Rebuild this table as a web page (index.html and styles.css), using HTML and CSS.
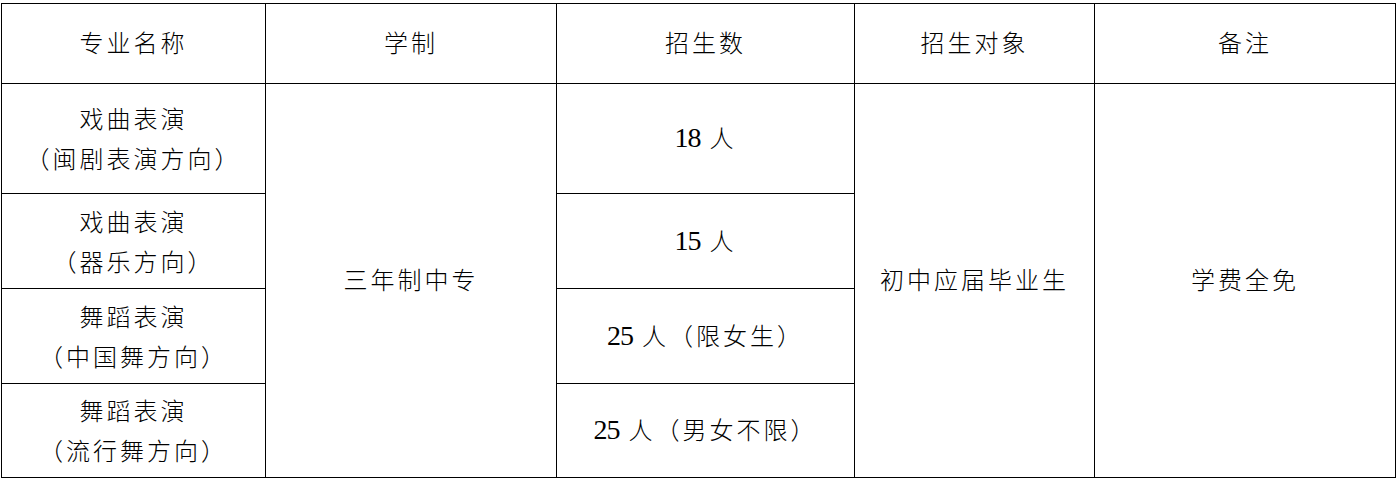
FILE: index.html
```html
<!DOCTYPE html>
<html lang="zh-CN">
<head>
<meta charset="utf-8">
<title>招生计划</title>
<link rel="stylesheet" href="styles.css">
</head>
<body>
<table class="plan">
  <colgroup>
    <col class="c-major">
    <col class="c-system">
    <col class="c-count">
    <col class="c-target">
    <col class="c-note">
  </colgroup>
  <thead>
    <tr class="r-head">
      <th>专业名称</th>
      <th>学制</th>
      <th>招生数</th>
      <th>招生对象</th>
      <th>备注</th>
    </tr>
  </thead>
  <tbody>
    <tr class="r-1">
      <td class="major"><div>戏曲表演</div><div>（闽剧表演方向）</div></td>
      <td rowspan="4">三年制中专</td>
      <td><span class="num">18</span> 人</td>
      <td rowspan="4">初中应届毕业生</td>
      <td rowspan="4">学费全免</td>
    </tr>
    <tr class="r-2">
      <td class="major"><div>戏曲表演</div><div>（器乐方向）</div></td>
      <td><span class="num">15</span> 人</td>
    </tr>
    <tr class="r-3">
      <td class="major"><div>舞蹈表演</div><div>（中国舞方向）</div></td>
      <td><span class="num">25</span> 人（限女生）</td>
    </tr>
    <tr class="r-4">
      <td class="major"><div>舞蹈表演</div><div>（流行舞方向）</div></td>
      <td><span class="num">25</span> 人（男女不限）</td>
    </tr>
  </tbody>
</table>
</body>
</html>
```
FILE: styles.css
```css
html, body {
  margin: 0;
  padding: 0;
  background: #fff;
}

body {
  padding: 3px 0 0 1px;
}

.plan {
  border-collapse: collapse;
  table-layout: fixed;
  width: 1395px;
  font-family: "Liberation Serif", "Noto Sans CJK SC", serif;
  font-size: 24px;
  font-weight: 300;
  color: #000;
}

.c-major { width: 264px; }
.c-system { width: 291px; }
.c-count { width: 298px; }
.c-target { width: 240px; }
.c-note { width: 301px; }

.plan th,
.plan td {
  border: 1px solid #000;
  padding: 0;
  text-align: center;
  vertical-align: middle;
  font-weight: 300;
  letter-spacing: 3px;
  line-height: 40px;
}

.plan td.major {
  padding-top: 3px;
}

.num {
  font-size: 28px;
  font-weight: 400;
  letter-spacing: -1px;
}

.r-head { height: 80px; }
.r-1 { height: 110px; }
.r-2 { height: 95px; }
.r-3 { height: 95px; }
.r-4 { height: 94px; }
```
